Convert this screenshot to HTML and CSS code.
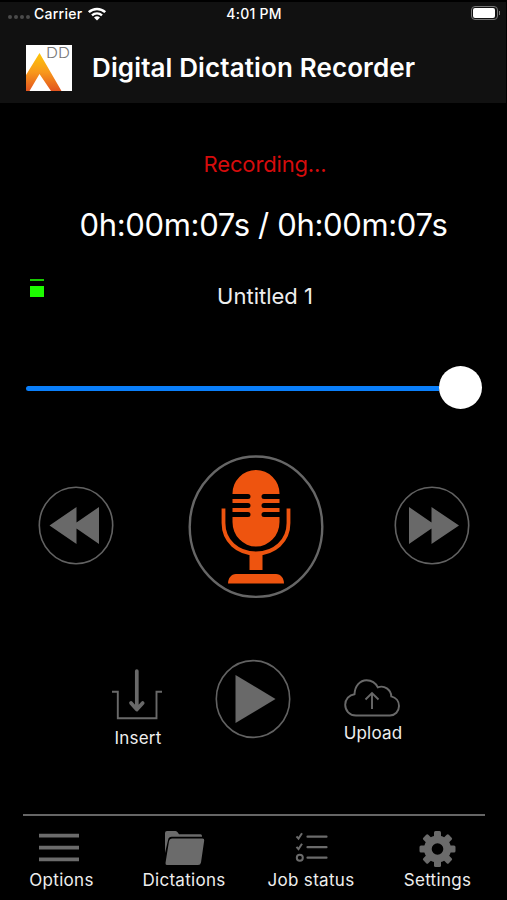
FILE: index.html
```html
<!DOCTYPE html>
<html lang="en">
<head>
    <meta charset="UTF-8">
    <meta name="viewport" content="width=device-width, initial-scale=1.0">
    <title>Digital Dictation Recorder</title>
    <link rel="stylesheet" href="styles.css">
</head>
<body>
    <div class="header">
        <div class="status-bar">
            <div class="network">
                <span class="signal"><i></i><i></i><i></i><i></i></span>
                <span class="carrier">Carrier</span>
                <svg class="wifi" viewBox="0 0 20 15" width="20" height="15">
                    <path d="M1.8 6.2a11.8 11.8 0 0 1 16.4 0" fill="none" stroke="#fff" stroke-width="2.5"/>
                    <path d="M5 9.4a7.2 7.2 0 0 1 10 0" fill="none" stroke="#fff" stroke-width="2.4"/>
                    <path d="M10 14.6 7 11.6a4.3 4.3 0 0 1 6 0z" fill="#fff"/>
                </svg>
            </div>
            <div class="clock">4:01 PM</div>
            <div class="power">
                <span class="battery"><i></i></span>
                <span class="battery-tip"></span>
            </div>
        </div>
        <div class="title-bar">
            <svg class="logo" viewBox="0 0 46 46" width="46" height="46">
                <defs>
                    <linearGradient id="flame" x1="0" y1="0" x2="0" y2="1">
                        <stop offset="0" stop-color="#fdc708"/>
                        <stop offset="0.5" stop-color="#f8991c"/>
                        <stop offset="1" stop-color="#e2541f"/>
                    </linearGradient>
                </defs>
                <rect width="46" height="46" fill="#fff"/>
                <path d="M13.5 8 35.5 46H25L13.5 29 3.5 46H0V30z" fill="url(#flame)"/>
                <text class="logo-text" x="20" y="12.5" textLength="24" lengthAdjust="spacingAndGlyphs">DD</text>
            </svg>
            <h1>Digital Dictation Recorder</h1>
        </div>
    </div>

    <div class="recorder">
        <div class="state">Recording...</div>
        <div class="timer">0h:00m:07s / 0h:00m:07s</div>
        <div class="name-row">
            <div class="meter"><i class="peak"></i><i class="level"></i></div>
            <div class="name">Untitled 1</div>
        </div>
        <div class="slider">
            <div class="track"></div>
            <div class="knob"></div>
        </div>
    </div>

    <div class="controls">
        <svg class="round-btn" viewBox="0 0 76 80" width="76" height="80">
            <ellipse cx="38" cy="39.5" rx="36.7" ry="38.2"/>
            <path d="M11.5 39.5 38.5 21v15.5L61 21v37L38.5 42.5V58z"/>
        </svg>
        <svg class="mic-btn" viewBox="0 0 136 144" width="136" height="144">
            <ellipse cx="68" cy="71.7" rx="66.3" ry="70.2"/>
            <path d="M44.5 39v-.5a23.5 23.5 0 0 1 47 0v.5H76a2.2 2.2 0 0 0 0 5h15.5v4H76a2.2 2.2 0 0 0 0 5h15.5v4H76a2.2 2.2 0 0 0 0 5h15.500v5a23.5 24.5 0 0 1-47 0v-5H60a2.2 2.2 0 0 0 0-5H44.5v-4H60a2.2 2.2 0 0 0 0-5H44.5v-4H60a2.2 2.2 0 0 0 0-5z"/>
            <path class="cradle" d="M35.5 53.500V68c0 18 14 30.5 32.5 30.5s32.500-12.500 32.500-30.500V53.500"/>
            <path d="M61.5 99h13v16h-13z"/>
            <path d="M40 128.500c0-5 3-9.500 8-9.500h40c5 0 8 4.500 8 9.500z"/>
        </svg>
        <svg class="round-btn" viewBox="0 0 76 80" width="76" height="80">
            <ellipse cx="38" cy="39.5" rx="36.7" ry="38.2"/>
            <path d="M15 21 37.500 36.500V21L65 39.500 37.500 58V42.500L15 58z"/>
        </svg>
    </div>

    <div class="actions">
        <div class="action insert">
            <svg viewBox="0 0 52 54" width="52" height="54">
                <path d="M1 22.700h5.800v26.500h38.700V22.700h5.500" stroke-width="1.900"/>
                <path d="M25.800 2v38M20 34l5.800 6.500 5.900-6.500" stroke-width="3.700" stroke-linecap="round" stroke-linejoin="round"/>
            </svg>
            <span>Insert</span>
        </div>
        <svg class="round-btn" viewBox="0 0 76 80" width="76" height="80">
            <ellipse cx="38" cy="40" rx="36.7" ry="38.4"/>
            <path d="M20.500 16 60.500 40l-40 24z"/>
        </svg>
        <div class="action upload">
            <svg viewBox="0 0 56 38" width="56" height="38">
                <path d="M12 36.500C5.500 36.500 1.200 31.500 1.200 25.800c0-5.500 4-10 9.300-10.600C10.800 7 16 1.200 22.500 1.200c5 0 9.200 2.800 11.300 7.200 6.500-2.600 13.200 2.200 13.500 9C52 18.500 55 22.500 55 27c0 5.300-4 9.500-9 9.500z" stroke-width="1.900"/>
                <path d="M28 30V14M21.500 20.500 28 14l6.500 6.500" stroke-width="1.900"/>
            </svg>
            <span>Upload</span>
        </div>
    </div>

    <div class="divider"></div>
    <div class="tabs">
        <div class="tab options">
            <svg viewBox="0 0 40 36" width="40" height="36">
                <path d="M0 2.700h40v3.700H0zM0 14.700h40v3.700H0zM0 26.500h40v3.700H0z"/>
            </svg>
            <span>Options</span>
        </div>
        <div class="tab dictations">
            <svg viewBox="0 0 40 36" width="40" height="36">
                <path d="M0 22V2q0-2 2-2h8.500q1.500 0 2.300 1.500L14 3.300h21.500Q37 3.300 37 5v.800H6.500Q3.800 5.800 3.200 8.500z"/>
                <path d="M7 7.400h30.500q2 0 1.700 2L36 31.500Q35.500 34 33 34H1.800Q.300 34 .500 32L4 10q.500-2.600 3-2.600z"/>
            </svg>
            <span>Dictations</span>
        </div>
        <div class="tab jobs">
            <svg viewBox="0 0 34 36" width="34" height="36">
                <path class="line" d="M12.500 5.700H31.500M12.500 16.200H31.500M12.500 26.700H31.500" stroke-width="2.200" stroke-linecap="round"/>
                <path class="line" d="M1.500 5.300 3.500 7.600 7 2.200M1.500 15.800l2 2.300L7 12.700" stroke-width="2"/>
                <circle class="line" cx="4.800" cy="26.700" r="3" stroke-width="2"/>
            </svg>
            <span>Job status</span>
        </div>
        <div class="tab settings">
            <svg viewBox="-18.500 -18 37 36" width="37" height="36">
                <rect x="-3.500" y="-18" width="7" height="36" rx="1.500"/>
                <rect x="-18" y="-3.500" width="36" height="7" rx="1.500"/>
                <rect x="-3.500" y="-18" width="7" height="36" rx="1.500" transform="rotate(45)"/>
                <rect x="-3.500" y="-18" width="7" height="36" rx="1.500" transform="rotate(-45)"/>
                <circle r="13.500"/>
                <circle class="hole" r="5.800"/>
            </svg>
            <span>Settings</span>
        </div>
    </div>
</body>
</html>
```
FILE: styles.css
```css
* {
    box-sizing: border-box;
}
body {
    margin: 0;
    width: 507px;
    height: 900px;
    overflow: hidden;
    background: #000;
    color: #fff;
    font-family: Inter, "Liberation Sans", sans-serif;
}
svg {
    display: block;
    flex: none;
}
.header {
    height: 103px;
    border-top: 2px solid #000;
    border-right: 1px solid #000;
    background: #111;
}
.status-bar {
    display: grid;
    grid-template-columns: 1fr 60px 1fr;
    align-items: center;
    height: 22px;
    padding: 0 6px 0 8px;
    font-size: 14px;
    font-weight: 500;
    letter-spacing: 0.25px;
}
.network {
    display: flex;
    align-items: center;
}
.signal {
    display: flex;
    gap: 2px;
    width: 26px;
    margin-top: 8px;
}
.signal i {
    width: 4px;
    height: 4px;
    border-radius: 50%;
    background: #4b4b4b;
}
.wifi {
    margin-left: 5px;
}
.clock {
    text-align: center;
    white-space: nowrap;
}
.power {
    display: flex;
    align-items: center;
    justify-content: flex-end;
    gap: 1px;
}
.battery {
    width: 27px;
    height: 14px;
    padding: 1px;
    border: 1px solid #777;
    border-radius: 4px;
}
.battery i {
    display: block;
    width: 22px;
    height: 10px;
    border-radius: 2px;
    background: #fff;
}
.battery-tip {
    width: 1px;
    height: 4px;
    background: #777;
}
.title-bar {
    display: flex;
    align-items: center;
    gap: 20px;
    padding: 9px 0 0 26px;
    height: 79px;
}
.logo-text {
    font-family: Inter, sans-serif;
    font-size: 14px;
    font-weight: 300;
    fill: #777;
}
h1 {
    margin: 0;
    font-size: 26px;
    font-weight: 600;
    line-height: 32px;
    letter-spacing: 0.12px;
    white-space: nowrap;
}
.recorder {
    display: flex;
    flex-direction: column;
    padding: 45px 25px 0 26px;
}
.state {
    padding-left: 22px;
    line-height: 32px;
    font-size: 22px;
    letter-spacing: -0.15px;
    text-align: center;
    color: #d60c0c;
}
.timer {
    margin-top: 24px;
    padding-left: 19px;
    line-height: 41px;
    font-size: 31px;
    letter-spacing: -0.35px;
    text-align: center;
    white-space: nowrap;
}
.name-row {
    display: flex;
    margin-top: 31px;
    height: 40px;
}
.meter {
    display: flex;
    flex-direction: column;
    gap: 5px;
    width: 22px;
    padding: 3px 0 0 4px;
}
.meter i {
    width: 14px;
    background: #1dfb00;
}
.peak {
    height: 2px;
    opacity: 0.8;
}
.level {
    height: 11px;
}
.name {
    flex: 1;
    line-height: 41px;
    font-size: 22px;
    text-align: center;
    color: #eee;
}
.slider {
    display: flex;
    align-items: center;
    margin-top: 49px;
    height: 44px;
}
.track {
    flex: 1;
    height: 5px;
    margin-top: 2px;
    border-radius: 3px 0 0 3px;
    background: #0a7ffb;
}
.knob {
    width: 43px;
    height: 43px;
    border-radius: 50%;
    background: #fff;
}
.controls {
    display: flex;
    align-items: center;
    justify-content: space-between;
    margin-top: 46px;
    padding: 0 37px 0 38px;
    height: 144px;
}
.controls .round-btn {
    margin-bottom: 2px;
}
.round-btn ellipse {
    fill: none;
    stroke: #626262;
    stroke-width: 1.6;
}
.round-btn path {
    fill: #696969;
}
.mic-btn {
    margin-left: 4px;
    fill: #ee540f;
}
.mic-btn ellipse {
    fill: none;
    stroke: #666;
    stroke-width: 2.4;
}
.mic-btn .cradle {
    fill: none;
    stroke: #ee540f;
    stroke-width: 3.8;
}
.actions {
    display: flex;
    align-items: flex-start;
    margin-top: 60px;
    padding-left: 98px;
    height: 90px;
}
.action {
    display: flex;
    flex-direction: column;
    align-items: center;
    font-size: 17px;
    line-height: 22px;
    letter-spacing: 0.2px;
    color: #eee;
}
.action svg {
    fill: none;
    stroke: #696969;
}
.insert {
    width: 80px;
    margin-right: 37px;
    padding-top: 10px;
}
.insert svg {
    margin: 0 2px 4px 0;
}
.upload {
    width: 80px;
    margin-left: 42px;
    padding-top: 20px;
}
.upload svg {
    margin: 0 2px 5px 0;
}
.divider {
    height: 2px;
    margin: 65px 22px 0 23px;
    background: #666;
}
.tabs {
    display: grid;
    grid-template-columns: 123px 122px 132px 121px;
    height: 84px;
}
.tab {
    display: flex;
    flex-direction: column;
    align-items: center;
    padding-top: 15px;
    font-size: 17px;
    line-height: 22px;
    letter-spacing: 0.3px;
    color: #eee;
    white-space: nowrap;
}
.tab svg {
    margin-bottom: 2px;
    fill: #6b6b6b;
}
.options svg {
    margin-right: 6px;
}
.dictations svg {
    margin-left: 2px;
}
.jobs svg {
    margin-left: 2px;
}
.tab .line {
    fill: none;
    stroke: #6b6b6b;
}
.tab .hole {
    fill: #000;
}
```
